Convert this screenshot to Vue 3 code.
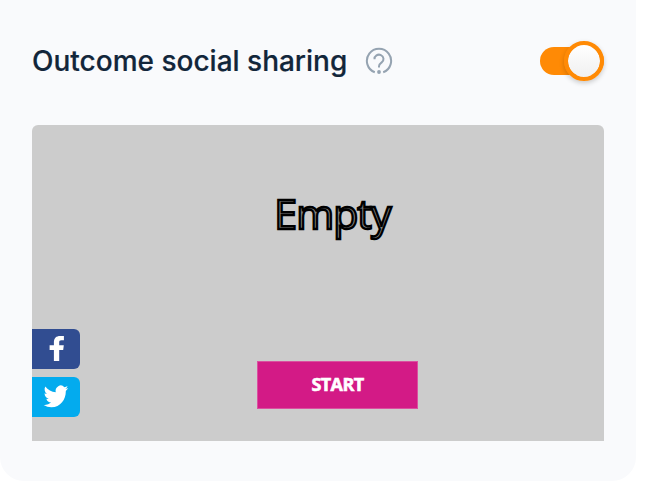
<template>
  <section class="sharing-card">
    <header class="card-header">
      <h2 class="card-title">Outcome social sharing</h2>
      <svg class="help-icon" viewBox="0 0 28 28" aria-label="Help">
        <path d="M9.8 25.3A12.1 12.1 0 1 1 18.2 25.3" />
        <path d="M9.5 12.2a4.5 4.3 0 1 1 7.2 3.2c-1.6 1.2-2.7 1.7-2.7 3.8v1.3" />
        <circle cx="14" cy="25" r="1.9" />
      </svg>
      <button
        class="toggle"
        :class="{ on: enabled }"
        role="switch"
        :aria-checked="enabled"
        @click="enabled = !enabled"
      >
        <span class="toggle-knob"></span>
      </button>
    </header>

    <div class="preview">
      <div class="preview-content">
        <div class="preview-title">Empty</div>
        <div class="preview-button">START</div>
      </div>
      <div v-if="enabled" class="share-buttons">
        <a class="share-btn facebook" aria-label="Facebook">
          <svg viewBox="0 0 48 40">
            <path d="M21.9 32V20.9H17.6V16.3H21.9V13.1C21.9 9.1 24.3 7 28.2 7H31.9V11.3H29.3C27.6 11.3 27.2 12 27.2 13.6V16.3H31.8L31.2 20.9H27.2V32Z" />
          </svg>
        </a>
        <a class="share-btn twitter" aria-label="Twitter">
          <svg viewBox="0 0 48 40">
            <g transform="translate(11.6 6) scale(1.03 1.12)">
              <path d="M23.95 4.57a10 10 0 0 1-2.82.77 4.96 4.96 0 0 0 2.16-2.72c-.95.55-2 .95-3.12 1.18a4.92 4.92 0 0 0-8.39 4.48C7.69 8.1 4.07 6.13 1.64 3.16a4.92 4.92 0 0 0 1.52 6.57 4.9 4.9 0 0 1-2.23-.61v.06c0 2.38 1.7 4.37 3.95 4.82a5 5 0 0 1-2.21.09 4.94 4.94 0 0 0 4.6 3.42A9.87 9.87 0 0 1 0 19.54a13.99 13.99 0 0 0 7.55 2.21c9.05 0 14-7.5 14-13.98 0-.21 0-.42-.02-.63a9.94 9.94 0 0 0 2.42-2.57Z" />
            </g>
          </svg>
        </a>
      </div>
    </div>
  </section>
</template>

<script setup>
import { ref } from 'vue'

const enabled = ref(true)
</script>

<style>
body {
  background: #fff;
}
</style>

<style scoped>
.sharing-card {
  box-sizing: border-box;
  width: 636px;
  height: 481px;
  padding: 41px 32px 40px;
  background: #f9fafc;
  border-radius: 0 0 24px 24px;
  font-family: Inter, "Liberation Sans", sans-serif;
}

.card-header {
  display: flex;
  align-items: center;
  height: 40px;
  margin-bottom: 44px;
}

.card-title {
  margin: 0;
  color: #12263a;
  font-size: 28px;
  font-weight: 500;
  line-height: 40px;
  white-space: nowrap;
  -webkit-text-stroke: 0.2px #12263a;
}

.help-icon {
  width: 28px;
  height: 28px;
  margin-left: 18px;
  fill: none;
  stroke: #95a3b1;
  stroke-width: 2;
}

.help-icon circle {
  fill: #95a3b1;
  stroke: none;
}

.toggle {
  display: flex;
  align-items: center;
  width: 64px;
  height: 28px;
  margin-left: auto;
  padding: 0;
  border: none;
  border-radius: 14px;
  background: #c3ccd6;
  cursor: pointer;
}

.toggle.on {
  justify-content: flex-end;
  background: #ff8a05;
}

.toggle-knob {
  box-sizing: border-box;
  flex: none;
  width: 40px;
  height: 40px;
  border: 4px solid #c3ccd6;
  border-radius: 50%;
  background: linear-gradient(#fff, #f0f0f0) padding-box;
  box-shadow: 0 2px 5px rgba(0, 0, 0, 0.2);
}

.toggle.on .toggle-knob {
  border-color: #ff8a05;
}

.preview {
  position: relative;
  height: 316px;
  border-radius: 6px 6px 0 0;
  background: #ccc;
  overflow: hidden;
}

.preview-content {
  display: flex;
  flex-direction: column;
  align-items: center;
  padding: 61px 0 0 39px;
  font-family: "Open Sans", "Noto Sans", sans-serif;
}

.preview-title {
  margin-right: 10px;
  color: #888;
  font-size: 41px;
  letter-spacing: -0.9px;
  line-height: 55px;
  -webkit-text-stroke: 2.3px #000;
}

.preview-button {
  box-sizing: border-box;
  width: 161px;
  height: 48px;
  margin-top: 120px;
  border: 1px solid #da50a0;
  background: #d31a86;
  color: #fff;
  font-size: 18px;
  font-weight: 700;
  letter-spacing: -0.6px;
  line-height: 45px;
  text-align: center;
  -webkit-text-stroke: 0.6px #fff;
}

/* stuck to the left edge of the preview */
.share-buttons {
  position: absolute;
  left: 0;
  bottom: 24px;
  display: flex;
  flex-direction: column;
  gap: 8px;
}

.share-btn {
  width: 48px;
  height: 40px;
  border-radius: 0 6px 6px 0;
}

.share-btn svg {
  display: block;
  width: 48px;
  height: 40px;
  fill: #fff;
}

.facebook {
  background: #314d91;
}

.twitter {
  background: #03abee;
}
</style>
